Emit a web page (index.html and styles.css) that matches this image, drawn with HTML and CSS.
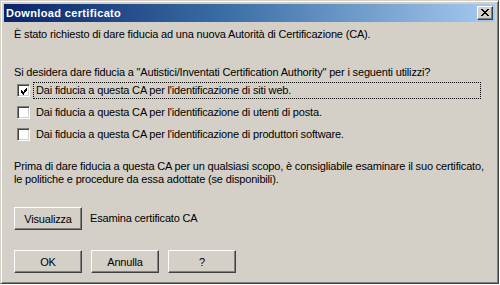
FILE: index.html
```html
<!DOCTYPE html>
<html lang="it">
<head>
    <meta charset="UTF-8">
    <title>Download certificato</title>
    <link rel="stylesheet" href="styles.css">
</head>
<body>
    <div class="window">
        <div class="titlebar">
            <span class="title">Download certificato</span>
            <span class="close-btn">
                <svg width="14" height="12" viewBox="0 0 14 12" shape-rendering="crispEdges">
                    <path d="M3 2h2v1h-2z M9 2h2v1h-2z M4 3h2v1h-2z M8 3h2v1h-2z M5 4h4v1h-4z M6 5h2v1h-2z M5 6h4v1h-4z M4 7h2v1h-2z M8 7h2v1h-2z M3 8h2v1h-2z M9 8h2v1h-2z" fill="#000"/>
                </svg>
            </span>
        </div>

        <div class="content">
            <p class="intro">È stato richiesto di dare fiducia ad una nuova Autorità di Certificazione (CA).</p>

            <p class="question">Si desidera dare fiducia a "Autistici/Inventati Certification Authority" per i seguenti utilizzi?</p>

            <div class="options">
                <div class="option">
                    <span class="checkbox">
                        <svg width="9" height="9" viewBox="0 0 9 9" shape-rendering="crispEdges">
                            <path d="M1 3h1v3h-1z M2 4h1v3h-1z M3 5h1v3h-1z M4 4h1v3h-1z M5 3h1v3h-1z M6 2h1v3h-1z M7 1h1v3h-1z" fill="#000"/>
                        </svg>
                    </span>
                    <span class="label focused">Dai fiducia a questa CA per l'identificazione di siti web.</span>
                </div>
                <div class="option">
                    <span class="checkbox"></span>
                    <span class="label">Dai fiducia a questa CA per l'identificazione di utenti di posta.</span>
                </div>
                <div class="option">
                    <span class="checkbox"></span>
                    <span class="label">Dai fiducia a questa CA per l'identificazione di produttori software.</span>
                </div>
            </div>

            <p class="notice">Prima di dare fiducia a questa CA per un qualsiasi scopo, è consigliabile esaminare il suo certificato,<br>le politiche e procedure da essa adottate (se disponibili).</p>

            <div class="view-row">
                <button class="btn">Visualizza</button>
                <span class="view-label">Esamina certificato CA</span>
            </div>

            <div class="actions">
                <button class="btn">OK</button>
                <button class="btn">Annulla</button>
                <button class="btn">?</button>
            </div>
        </div>
    </div>
</body>
</html>
```

FILE: styles.css
```css
* {
    margin: 0;
    padding: 0;
    box-sizing: border-box;
}

body {
    background: #fff;
    font-family: "Liberation Sans", Arial, sans-serif;
    font-size: 11px;
    letter-spacing: -0.17px;
    color: #000;
}

.window {
    width: 499px;
    height: 284px;
    background: #d4d0c8;
    border: 1px solid;
    border-color: #d4d0c8 #404040 #404040 #d4d0c8;
    box-shadow: inset 1px 1px #fff, inset -1px -1px #808080;
    padding: 3px;
    overflow: hidden;
}

.titlebar {
    height: 18px;
    display: flex;
    align-items: center;
    justify-content: space-between;
    padding: 0 2px 0 2px;
    background: linear-gradient(90deg, #0a246a 0%, #3a6ea5 45%, #a6caf0 100%);
}

.title {
    color: #fff;
    font-weight: bold;
    font-size: 11px;
    line-height: 13px;
    letter-spacing: 0.35px;
}

.close-btn {
    width: 16px;
    height: 14px;
    display: flex;
    border: 1px solid;
    border-color: #fff #404040 #404040 #fff;
    box-shadow: inset -1px -1px #808080;
    background: #d4d0c8;
}

.content {
    padding: 6px 10px 0 10px;
    line-height: 13px;
    white-space: nowrap;
}

.question {
    margin-top: 25px;
}

.options {
    margin-top: 4px;
    display: flex;
    flex-direction: column;
    gap: 7px;
    padding-left: 3px;
}

.option {
    display: flex;
    align-items: center;
    height: 15px;
}

.checkbox {
    width: 13px;
    height: 13px;
    display: flex;
    padding: 1px;
    background: #fff;
    border: 1px solid;
    border-color: #808080 #fff #fff #808080;
    box-shadow: inset 1px 1px #404040, inset -1px -1px #d4d0c8;
}

.checkbox svg {
    margin: 1px 0 0 1px;
}

.label {
    margin-left: 3px;
    padding: 1px 2px;
    border: 1px dotted transparent;
}

.label.focused {
    border-color: #000;
    width: 448px;
}

.notice {
    margin-top: 18px;
}

.view-row {
    margin-top: 21px;
    display: flex;
    align-items: center;
    gap: 8px;
}

.btn {
    width: 68px;
    height: 23px;
    background: #d4d0c8;
    font-family: "Liberation Sans", Arial, sans-serif;
    font-size: 11px;
    letter-spacing: -0.17px;
    color: #000;
    border: 1px solid;
    border-color: #fff #404040 #404040 #fff;
    box-shadow: inset -1px -1px #808080;
}

.actions {
    margin-top: 20px;
    display: flex;
    gap: 9px;
}
```
